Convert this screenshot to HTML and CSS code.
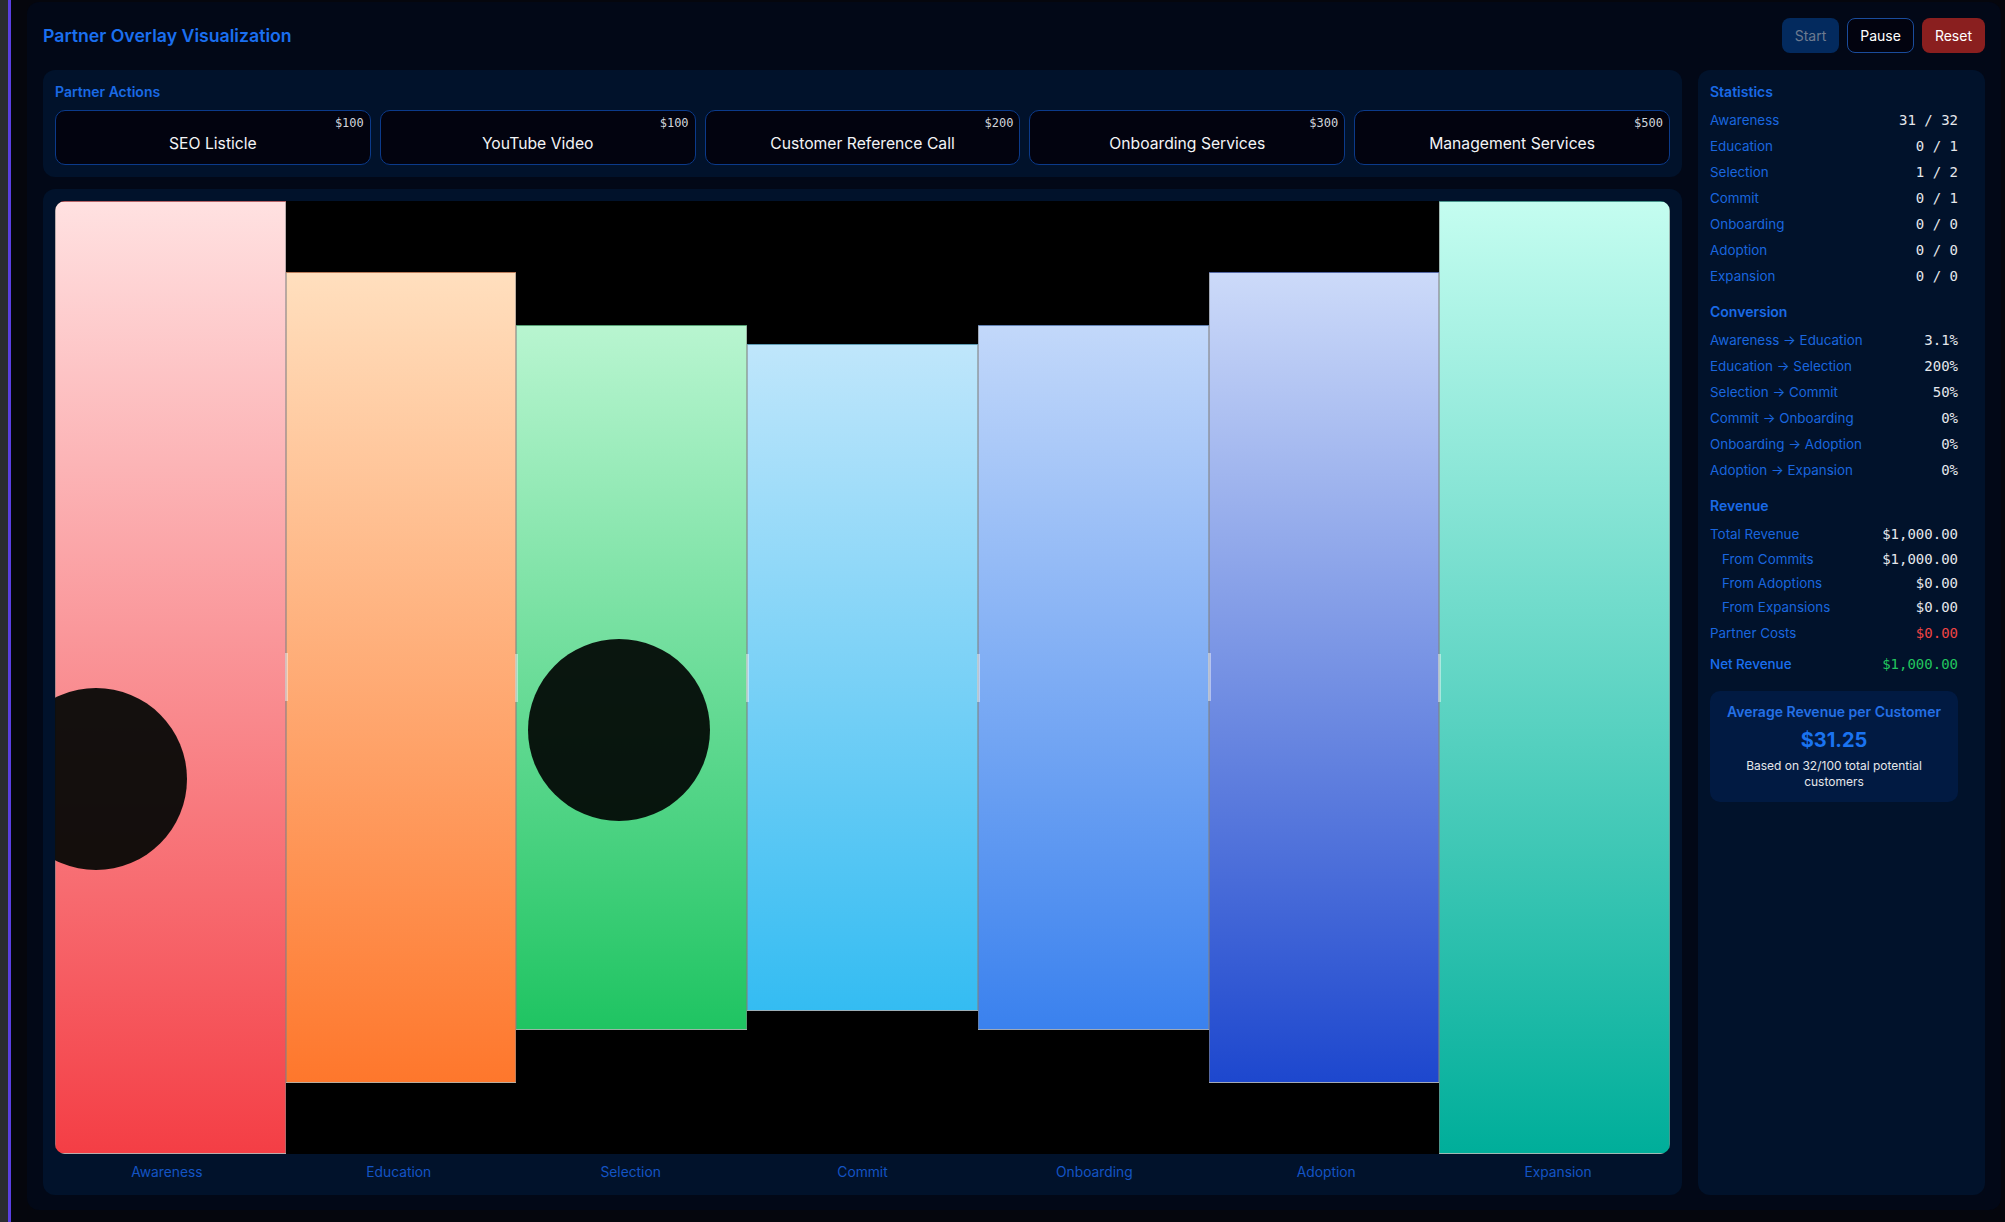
FILE: index.html
```html
<!DOCTYPE html>
<html lang="en">
<head>
    <meta charset="UTF-8">
    <meta name="viewport" content="width=device-width, initial-scale=1.0">
    <title>Partner Overlay Visualization</title>
    <link rel="stylesheet" href="styles.css">
</head>
<body>
<div class="side-strip"></div>
<div class="app">
    <!-- Header -->
    <div class="header">
        <h1>Partner Overlay Visualization</h1>
        <div class="controls">
            <button type="button" class="btn btn-start">Start</button>
            <button type="button" class="btn btn-pause">Pause</button>
            <button type="button" class="btn btn-reset">Reset</button>
        </div>
    </div>

    <div class="content">
        <div class="main-col">
            <!-- Partner Actions -->
            <div class="panel actions-panel">
                <h2>Partner Actions</h2>
                <div class="actions">
                    <button type="button" class="action"><span class="price">$100</span>SEO Listicle</button>
                    <button type="button" class="action"><span class="price">$100</span>YouTube Video</button>
                    <button type="button" class="action"><span class="price">$200</span>Customer Reference Call</button>
                    <button type="button" class="action"><span class="price">$300</span>Onboarding Services</button>
                    <button type="button" class="action"><span class="price">$500</span>Management Services</button>
                </div>
            </div>

            <!-- Funnel -->
            <div class="panel chart-panel">
                <div class="chart">
                    <div class="bar bar-awareness" style="height: 100%;"></div>
                    <div class="bar bar-education" style="height: 85%;"><span class="handle"></span></div>
                    <div class="bar bar-selection" style="height: 74%;"><span class="handle"></span></div>
                    <div class="bar bar-commit" style="height: 70%;"><span class="handle"></span></div>
                    <div class="bar bar-onboarding" style="height: 74%;"><span class="handle"></span></div>
                    <div class="bar bar-adoption" style="height: 85%;"><span class="handle"></span></div>
                    <div class="bar bar-expansion" style="height: 100%;"><span class="handle"></span></div>

                    <div class="customer" style="left: -50px; top: 487px;"></div>
                    <div class="customer" style="left: 473px; top: 438px;"></div>
                </div>
                <div class="stage-labels">
                    <span>Awareness</span>
                    <span>Education</span>
                    <span>Selection</span>
                    <span>Commit</span>
                    <span>Onboarding</span>
                    <span>Adoption</span>
                    <span>Expansion</span>
                </div>
            </div>
        </div>

        <!-- Stats -->
        <div class="panel stats-panel">
            <h2>Statistics</h2>
            <div class="row"><span>Awareness</span><span class="val">31 / 32</span></div>
            <div class="row"><span>Education</span><span class="val">0 / 1</span></div>
            <div class="row"><span>Selection</span><span class="val">1 / 2</span></div>
            <div class="row"><span>Commit</span><span class="val">0 / 1</span></div>
            <div class="row"><span>Onboarding</span><span class="val">0 / 0</span></div>
            <div class="row"><span>Adoption</span><span class="val">0 / 0</span></div>
            <div class="row"><span>Expansion</span><span class="val">0 / 0</span></div>

            <h2 class="section">Conversion</h2>
            <div class="row"><span>Awareness → Education</span><span class="val">3.1%</span></div>
            <div class="row"><span>Education → Selection</span><span class="val">200%</span></div>
            <div class="row"><span>Selection → Commit</span><span class="val">50%</span></div>
            <div class="row"><span>Commit → Onboarding</span><span class="val">0%</span></div>
            <div class="row"><span>Onboarding → Adoption</span><span class="val">0%</span></div>
            <div class="row"><span>Adoption → Expansion</span><span class="val">0%</span></div>

            <h2 class="section">Revenue</h2>
            <div class="row"><span>Total Revenue</span><span class="val">$1,000.00</span></div>
            <div class="row sub"><span>From Commits</span><span class="val">$1,000.00</span></div>
            <div class="row sub"><span>From Adoptions</span><span class="val">$0.00</span></div>
            <div class="row sub"><span>From Expansions</span><span class="val">$0.00</span></div>
            <div class="row costs"><span>Partner Costs</span><span class="val red">$0.00</span></div>
            <div class="row net"><span>Net Revenue</span><span class="val green">$1,000.00</span></div>

            <div class="avg-box">
                <div class="avg-title">Average Revenue per Customer</div>
                <div class="avg-value">$31.25</div>
                <div class="avg-note">Based on 32/100 total potential customers</div>
            </div>
        </div>
    </div>
</div>
</body>
</html>
```

FILE: styles.css
```css
body {
    margin: 0;
    padding: 0;
    display: flex;
    height: 1222px;
    overflow: hidden;
    background-color: #05060d;
    font-family: Inter, "Noto Sans", sans-serif;
}
.side-strip {
    width: 8px;
    flex-shrink: 0;
    background-color: #2a2c31;
    border-right: 3px solid #5a3fe2;
}
.app {
    box-sizing: border-box;
    width: 1974px;
    height: 1208px;
    margin: 2px 0 0 16px;
    padding: 16px 16px 15px 16px;
    background-color: #020817;
    border-radius: 12px;
    display: flex;
    flex-direction: column;
}
.header {
    display: flex;
    justify-content: space-between;
    align-items: center;
    height: 35px;
    margin-bottom: 17px;
}
h1 {
    margin: 0;
    font-size: 17.7px;
    font-weight: 600;
    color: #1a6ff0;
}
h2 {
    margin: 0;
    font-size: 14px;
    line-height: 20px;
    font-weight: 600;
    color: #1a6ae6;
}
.controls {
    display: flex;
    gap: 8px;
}
.btn {
    height: 35px;
    padding: 0 12px;
    font-family: inherit;
    font-size: 14px;
    border-radius: 8px;
    border: 1px solid transparent;
    color: #fff;
    cursor: pointer;
}
.btn-start {
    background-color: #032a5e;
    color: #6d7b90;
}
.btn-pause {
    background-color: #02030f;
    border-color: #1a4c9c;
}
.btn-reset {
    background-color: #8a1f1f;
}
.content {
    flex: 1;
    display: grid;
    grid-template-columns: 1fr 287px;
    gap: 16px;
    min-height: 0;
}
.main-col {
    display: flex;
    flex-direction: column;
    gap: 12px;
    min-height: 0;
}
.panel {
    background-color: #01122b;
    border-radius: 12px;
    padding: 12px;
}
.actions {
    display: grid;
    grid-template-columns: repeat(5, 1fr);
    gap: 9px;
    margin-top: 8px;
}
.action {
    position: relative;
    box-sizing: border-box;
    height: 55px;
    padding: 21px 8px 8px;
    background-color: #02030f;
    border: 1px solid #0b3a8a;
    border-radius: 10px;
    color: #f3f4f6;
    font-family: inherit;
    font-size: 15.7px;
    line-height: 24px;
    cursor: pointer;
}
.price {
    position: absolute;
    top: 5px;
    right: 6px;
    font-family: "DejaVu Sans Mono", monospace;
    font-size: 12px;
    line-height: 14px;
    color: #d1d5db;
}
.chart-panel {
    flex: 1;
    display: flex;
    flex-direction: column;
    padding-bottom: 13px;
}
.chart {
    position: relative;
    flex: 1;
    display: flex;
    align-items: center;
    background-color: #000;
    border-radius: 10px;
    overflow: hidden;
}
.bar {
    position: relative;
    flex: 1;
    box-sizing: border-box;
    border: 1px solid rgba(130, 130, 130, 0.55);
}
.handle {
    position: absolute;
    left: -2px;
    top: 50%;
    width: 3px;
    height: 48px;
    margin-top: -24px;
    background-color: rgba(255, 255, 255, 0.45);
}
.bar-awareness { background: linear-gradient(#ffe1e1, #f43e45); }
.bar-education { background: linear-gradient(#ffdfbe, #fe772c); }
.bar-selection { background: linear-gradient(#b8f5d0, #1fc462); }
.bar-commit { background: linear-gradient(#bfe6fb, #34bcf2); }
.bar-onboarding { background: linear-gradient(#c2d8fa, #3a81ee); }
.bar-adoption { background: linear-gradient(#ccdaf9, #1d47ce); }
.bar-expansion { background: linear-gradient(#c4fdf0, #00ae9a); }
.customer {
    position: absolute;
    width: 182px;
    height: 182px;
    border-radius: 50%;
    background-color: rgba(2, 6, 4, 0.93);
}
.stage-labels {
    display: grid;
    grid-template-columns: repeat(7, 1fr);
    margin: 8px -4px 0 -4px;
    text-align: center;
    font-size: 13.8px;
    line-height: 20px;
    color: #1454c4;
}
.stats-panel {
    padding: 12px 27px 12px 12px;
}
.stats-panel h2 {
    margin-bottom: 5px;
}
.stats-panel .section {
    margin-top: 13px;
}
.row {
    display: flex;
    justify-content: space-between;
    height: 26px;
    align-items: center;
    font-size: 13.4px;
    color: #1a66df;
}
.row.sub {
    height: 24px;
    padding-left: 12px;
    font-size: 13.4px;
}
.row.costs {
    margin-top: 1px;
}
.row.net {
    margin-top: 5px;
    font-weight: 500;
    color: #1a6ff0;
}
.val {
    font-family: "DejaVu Sans Mono", monospace;
    font-size: 14px;
    font-weight: 400;
    color: #e5e7eb;
}
.val.red { color: #ef4444; }
.val.green { color: #22c55e; }
.avg-box {
    margin-top: 14px;
    padding: 11px 12px 12px;
    background-color: #011a42;
    border-radius: 10px;
    text-align: center;
}
.avg-title {
    font-size: 14px;
    line-height: 20px;
    font-weight: 600;
    color: #2470e6;
    margin-bottom: 4px;
}
.avg-value {
    font-size: 20px;
    line-height: 28px;
    font-weight: 700;
    color: #1a73f0;
    margin-bottom: 4px;
}
.avg-note {
    font-size: 12px;
    line-height: 16px;
    color: #e5e7eb;
    padding: 0 20px;
}
```
